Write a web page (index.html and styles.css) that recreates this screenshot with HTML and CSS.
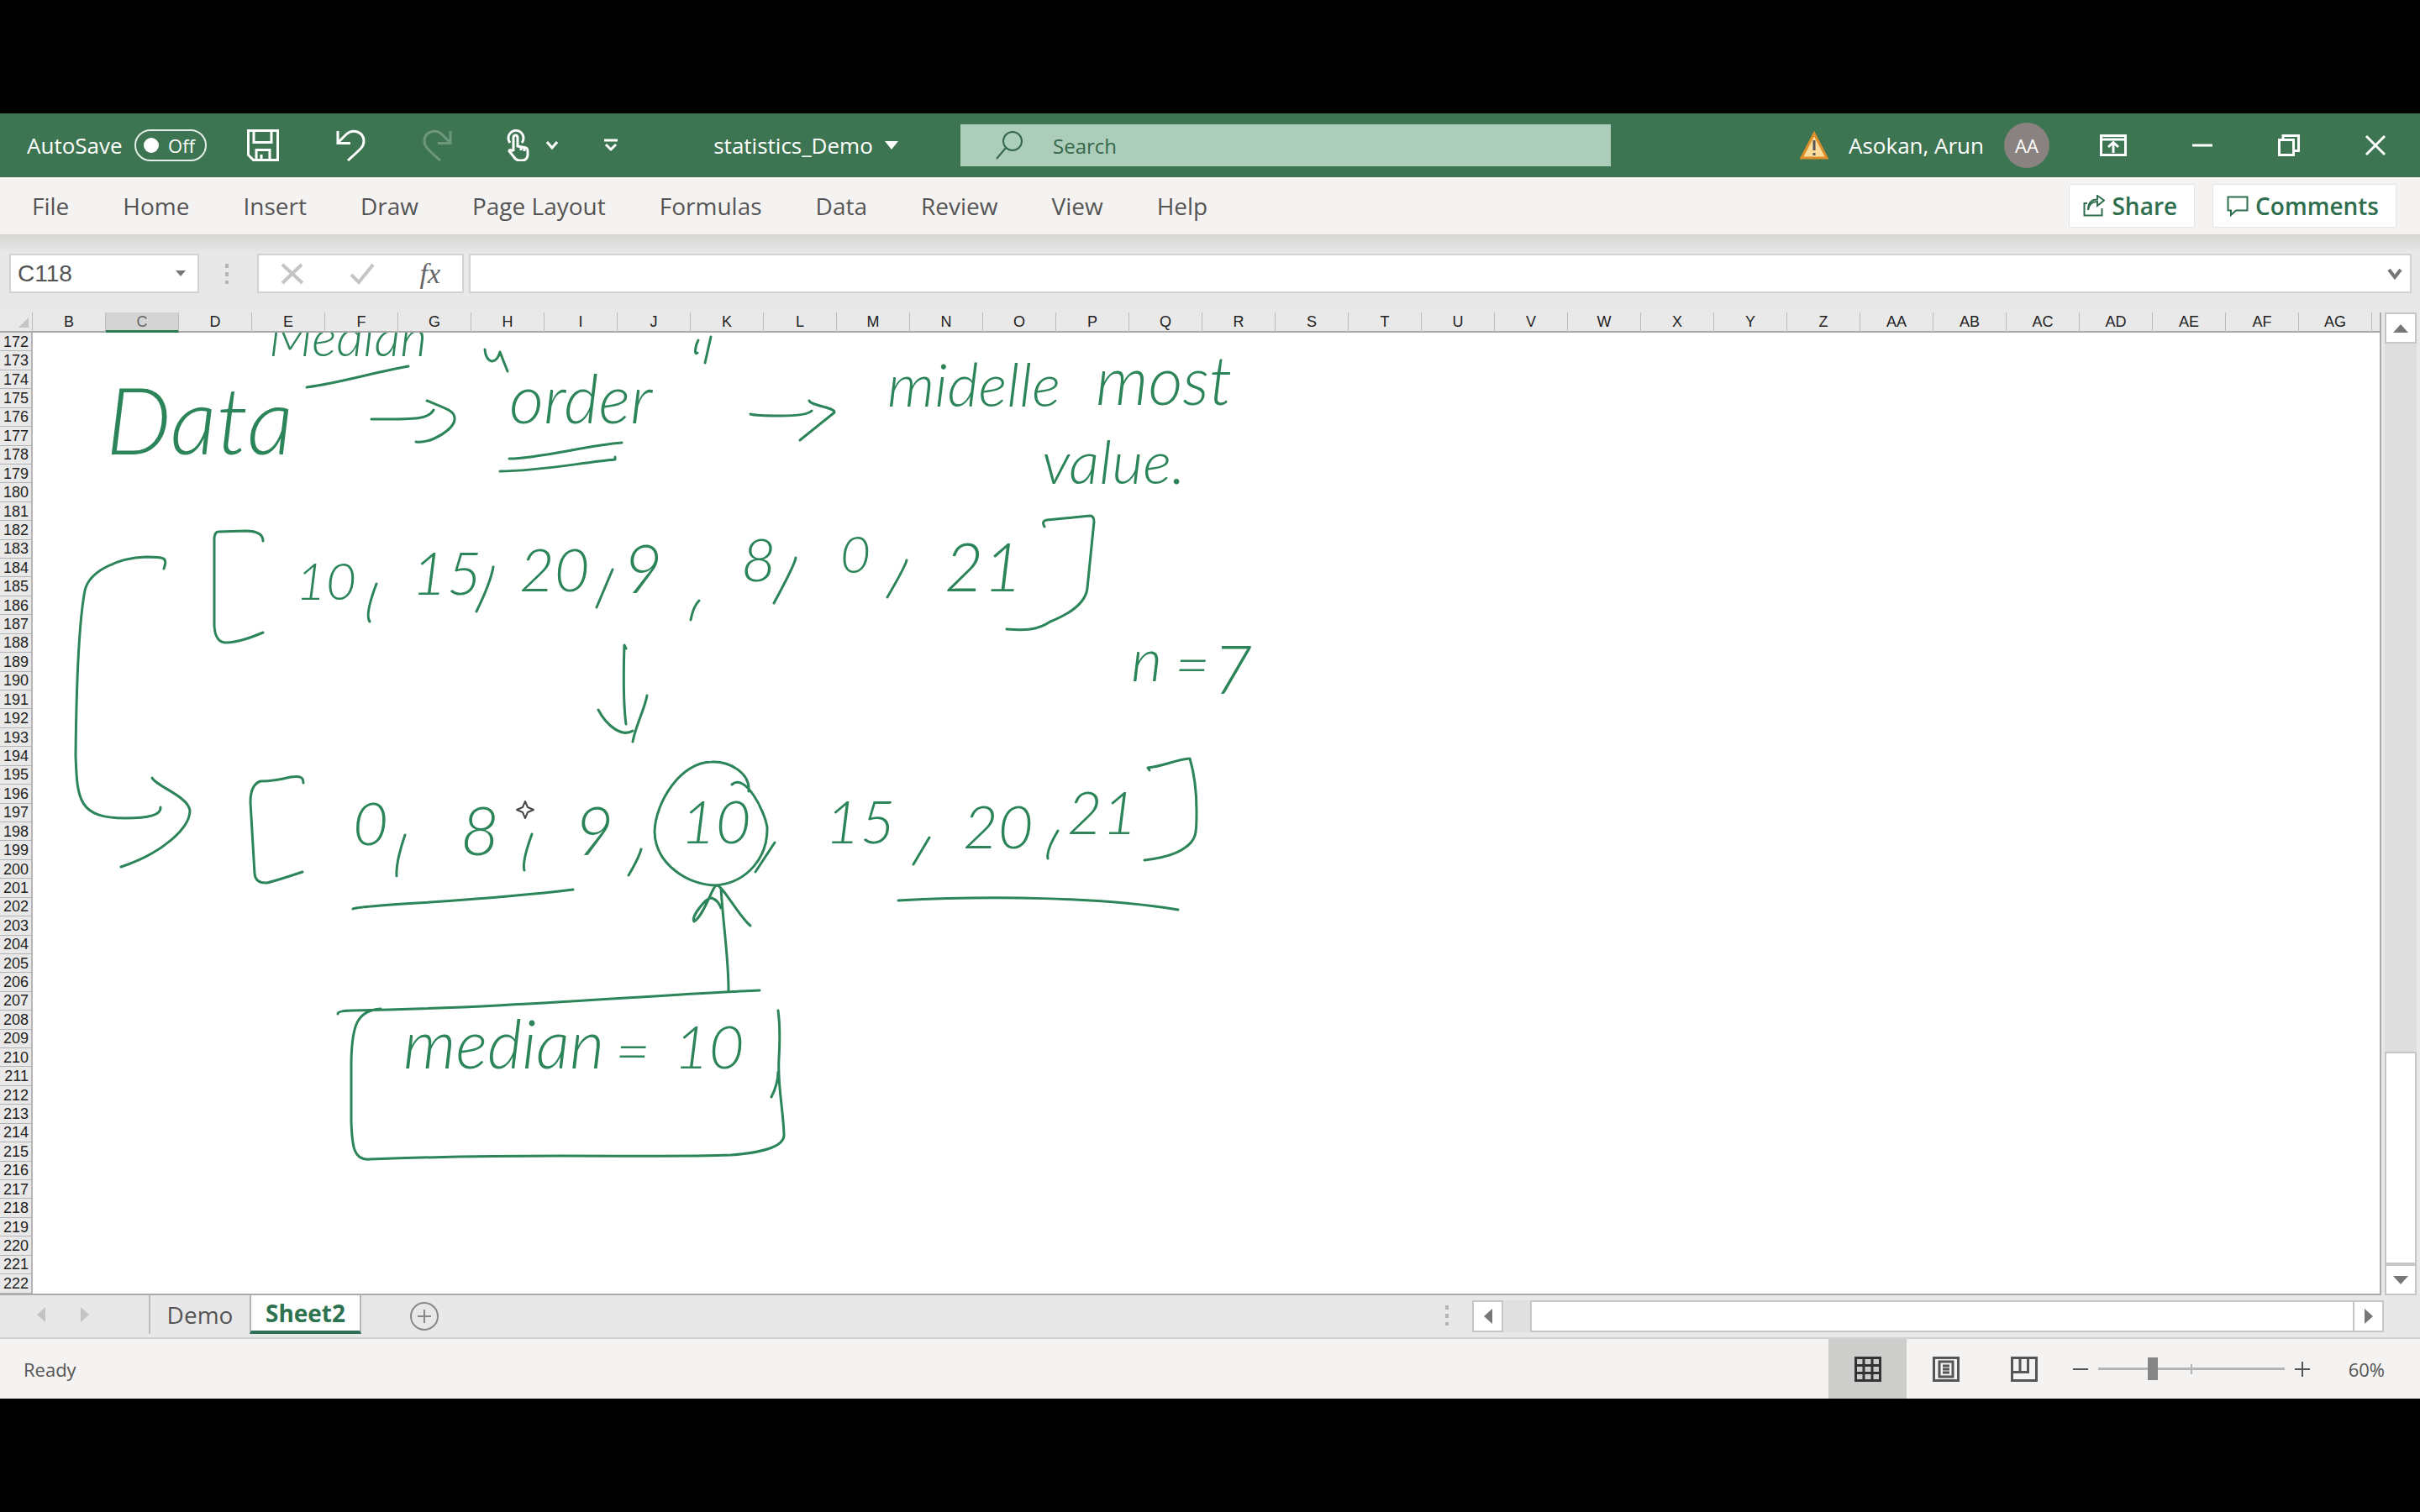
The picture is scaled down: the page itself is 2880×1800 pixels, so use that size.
FILE: index.html
```html
<!DOCTYPE html>
<html lang="en">
<head>
<meta charset="utf-8">
<title>statistics_Demo - Excel</title>
<link rel="stylesheet" href="styles.css">
</head>
<body>
<div class="app">
  <header class="titlebar">
    <label class="autosave" for="autosave">AutoSave</label>
    <span class="toggle"><input id="autosave" type="checkbox" class="toggle-input"><span class="toggle-text">Off</span></span>
    <div class="quick">
      <button class="icon-btn" aria-label="Save"><svg width="38" height="38" viewBox="0 0 38 38"><path d="M1.500 1.500H36.500V36.500H7.500L1.500 30.500ZM8 1.500V15.500H29V1.500M11 36.500V24.500H27V36.500M17 30V36.500"/></svg></button>
      <button class="icon-btn" aria-label="Undo"><svg width="38" height="38" viewBox="0 0 38 38"><path d="M4 2V16.500H19M4 16L14 6C23-2 35 4 35 14C35 20 33 22 16 37"/></svg></button>
      <button class="icon-btn faded" aria-label="Redo"><svg width="38" height="38" viewBox="0 0 38 38"><path d="M34 2V16.500H19M34 16L24 6C15-2 3 4 3 14C3 20 5 22 22 37"/></svg></button>
    </div>
    <div class="quick quick-touch">
      <button class="icon-btn" aria-label="Touch mode"><svg width="28" height="38" viewBox="0 0 28 38"><path d="M5 16A9 9 0 1 1 19 16M9 26V10Q9 7 11.500 7T14 10V20L24 22Q26 23 26 26V31Q25 37 19 37H15Q11 36 9 32L4 26Q4 23 9 26M18 20V25M22 22V26"/></svg></button>
      <button class="icon-btn" aria-label="Touch mode options"><svg width="14" height="10" viewBox="0 0 14 10"><path d="M1 1L7 8L13 1"/></svg></button>
    </div>
    <button class="icon-btn customize" aria-label="Customize toolbar"><svg width="18" height="16" viewBox="0 0 18 16"><path d="M1 2H17M3 7L9 13L15 7"/></svg></button>
    <button class="doc-name">statistics_Demo<svg width="16" height="10" viewBox="0 0 16 10"><path class="solid" d="M0 0H16L8 10Z"/></svg></button>
    <label class="search">
      <svg width="34" height="34" viewBox="0 0 34 34"><circle cx="20" cy="12" r="11"/><path d="M12 20L1 33"/></svg>
      <input type="text" placeholder="Search" aria-label="Search">
    </label>
    <div class="account">
      <svg width="34" height="34" viewBox="0 0 34 34"><path fill="#fbdc9c" stroke="#dd8f2c" stroke-width="3" d="M17 3L32 32H2Z"/><path stroke="#555" stroke-width="3" d="M17 11V23M17 26V29"/></svg>
      <span class="user">Asokan, Arun</span>
      <span class="avatar">AA</span>
    </div>
    <div class="window-controls">
      <button class="icon-btn" aria-label="Ribbon display options"><svg width="32" height="26" viewBox="0 0 32 26"><path d="M1.500 1.500H30.500V24.500H1.500ZM1.500 6H30.500M16 22V10M10 15L16 9.500L22 15"/></svg></button>
      <button class="icon-btn" aria-label="Minimize"><svg width="26" height="26" viewBox="0 0 26 26"><path d="M1 13H25"/></svg></button>
      <button class="icon-btn" aria-label="Restore"><svg width="26" height="26" viewBox="0 0 26 26"><path d="M1.500 6.500H18.500V24.500H1.500ZM6 6V1.500H24.500V19.500H19"/></svg></button>
      <button class="icon-btn" aria-label="Close"><svg width="26" height="26" viewBox="0 0 26 26"><path d="M2 2L24 24M24 2L2 24"/></svg></button>
    </div>
  </header>

  <nav class="ribbon">
    <a href="#file">File</a><a href="#home">Home</a><a href="#insert">Insert</a><a href="#draw">Draw</a><a href="#layout">Page Layout</a><a href="#formulas">Formulas</a><a href="#data">Data</a><a href="#review">Review</a><a href="#view">View</a><a href="#help">Help</a>
    <div class="ribbon-actions">
      <button class="pill"><svg width="26" height="26" viewBox="0 0 26 26"><path d="M5 10H1.500V24.500H22.500V16M6 18C7 11 11 8 17 8V13L25 6.500L17 1V5.500C10 5.500 6 10 6 18Z"/></svg>Share</button>
      <button class="pill"><svg width="26" height="26" viewBox="0 0 26 26"><path d="M1.500 2.500H24.500V18.500H11L5 24V18.500H1.500Z"/></svg>Comments</button>
    </div>
  </nav>

  <div class="formula-row">
    <div class="name-box"><input type="text" value="C118" aria-label="Name box"><svg width="12" height="8" viewBox="0 0 12 8"><path class="dark" d="M0 0H12L6 7Z"/></svg></div>
    <span class="grip"></span>
    <div class="formula-tools">
      <button aria-label="Cancel"><svg width="28" height="26" viewBox="0 0 28 26"><path d="M2 2L26 24M25 2L2 24"/></svg></button>
      <button aria-label="Enter"><svg width="30" height="26" viewBox="0 0 30 26"><path d="M2 14L11 23L28 2"/></svg></button>
      <button class="fx" aria-label="Insert function">fx</button>
    </div>
    <div class="formula"><input type="text" aria-label="Formula bar"><button aria-label="Expand formula bar"><svg width="18" height="14" viewBox="0 0 18 14"><path d="M2 2L9 11L16 2"/></svg></button></div>
  </div>

  <main class="workspace">
    <div class="sheet">
      <table>
        <colgroup><col class="row-col"><col class="data-col" span="32"><col></colgroup>
        <thead><tr><th class="corner"><svg width="12" height="12" viewBox="0 0 12 12"><path d="M12 0V12H0Z"/></svg></th><th>B</th><th class="current">C</th><th>D</th><th>E</th><th>F</th><th>G</th><th>H</th><th>I</th><th>J</th><th>K</th><th>L</th><th>M</th><th>N</th><th>O</th><th>P</th><th>Q</th><th>R</th><th>S</th><th>T</th><th>U</th><th>V</th><th>W</th><th>X</th><th>Y</th><th>Z</th><th>AA</th><th>AB</th><th>AC</th><th>AD</th><th>AE</th><th>AF</th><th>AG</th><th></th></tr></thead>
        <tbody>
          <tr><th>172</th><td rowspan="51" colspan="33"></td></tr>
          <tr><th>173</th></tr><tr><th>174</th></tr><tr><th>175</th></tr><tr><th>176</th></tr><tr><th>177</th></tr>
          <tr><th>178</th></tr><tr><th>179</th></tr><tr><th>180</th></tr><tr><th>181</th></tr><tr><th>182</th></tr>
          <tr><th>183</th></tr><tr><th>184</th></tr><tr><th>185</th></tr><tr><th>186</th></tr><tr><th>187</th></tr>
          <tr><th>188</th></tr><tr><th>189</th></tr><tr><th>190</th></tr><tr><th>191</th></tr><tr><th>192</th></tr>
          <tr><th>193</th></tr><tr><th>194</th></tr><tr><th>195</th></tr><tr><th>196</th></tr><tr><th>197</th></tr>
          <tr><th>198</th></tr><tr><th>199</th></tr><tr><th>200</th></tr><tr><th>201</th></tr><tr><th>202</th></tr>
          <tr><th>203</th></tr><tr><th>204</th></tr><tr><th>205</th></tr><tr><th>206</th></tr><tr><th>207</th></tr>
          <tr><th>208</th></tr><tr><th>209</th></tr><tr><th>210</th></tr><tr><th>211</th></tr><tr><th>212</th></tr>
          <tr><th>213</th></tr><tr><th>214</th></tr><tr><th>215</th></tr><tr><th>216</th></tr><tr><th>217</th></tr>
          <tr><th>218</th></tr><tr><th>219</th></tr><tr><th>220</th></tr><tr><th>221</th></tr><tr><th>222</th></tr>
        </tbody>
      </table>

      <!-- Ink layer: pen strokes and handwritten notes above the cells -->
      <svg class="ink" width="1500" height="1000" viewBox="39 396 1500 1000">
        <g class="note">
          <text class="sm" x="320" y="424">Median</text>
          <text class="xl" x="126" y="541">Data</text>
          <text class="lg" x="606" y="504">order</text>
          <text class="md" x="1056" y="484">midelle</text>
          <text class="lg" x="1304" y="482">most</text>
          <text class="md" x="1240" y="576">value.</text>
          <text class="sm" x="352" y="714">10</text>
          <text class="md" x="490" y="708">15</text>
          <text class="md" x="618" y="704">20</text>
          <text class="lg" x="742" y="706">9</text>
          <text class="md" x="882" y="692">8</text>
          <text class="sm" x="1000" y="682">0</text>
          <text class="lg" x="1124" y="704">21</text>
          <text class="md" x="1346" y="811">n</text>
          <text class="md" x="1398" y="816">=</text>
          <text class="lg" x="1444" y="826">7</text>
          <text class="md" x="420" y="1006">0</text>
          <text class="lg" x="548" y="1018">8</text>
          <text class="lg" x="684" y="1018">9</text>
          <text class="md" x="810" y="1004">10</text>
          <text class="md" x="982" y="1004">15</text>
          <text class="md" x="1146" y="1010">20</text>
          <text class="md" x="1270" y="993">21</text>
          <text class="lg" x="480" y="1272">median</text>
          <text class="md" x="732" y="1276">=</text>
          <text class="md" x="802" y="1272">10</text>
        </g>
        <g class="stroke">
          <path d="M365 461C405 456 450 442 486 436"/>
          <path d="M577 416C578 432 590 436 595 419L604 442M831 405C827 412 826 424 830 420M846 401L839 432"/>
          <path d="M442 499C490 499 510 500 516 488M508 477C530 486 542 489 541 499C541 510 515 528 495 526"/>
          <path d="M606 546C640 546 700 530 740 527M595 561C640 561 690 551 732 547V544"/>
          <path d="M893 493Q900 495 930 495T966 489M963 477C965 483 994 485 993 491L952 524"/>
          <path d="M313 644C313 636 305 632 292 632L260 633Q256 633 255 640V745Q256 764 268 765Q285 765 313 753"/>
          <path d="M195 677C200 664 196 663 174 663C140 664 106 680 101 703C94 740 91 800 90 900C92 950 92 974 149 974C178 974 192 970 191 961M181 926C186 936 224 948 226 965C226 985 195 1015 144 1032"/>
          <path d="M1243 627Q1239 620 1246 619L1297 614Q1302 614 1302 621L1294 700C1292 720 1270 732 1250 740C1235 750 1220 751 1198 749"/>
          <path d="M448 695Q434 732 440 740M587 675Q584 693 567 728M729 678L710 723M832 715Q825 722 822 738M947 664Q946 672 921 718M1079 667Q1077 675 1056 711"/>
          <path d="M745 772L743 768C742 800 742 840 745 862M712 845C722 864 740 878 753 870M770 828C768 842 756 865 753 883"/>
          <path d="M361 932C361 926 358 923 346 925C330 929 322 930 310 930Q298 934 298 955L303 1040Q304 1052 318 1051Q330 1048 360 1038"/>
          <path d="M482 994Q471 1026 472 1043M633 993Q621 1026 624 1036M763 1011Q760 1022 748 1042M922 1003L899 1038M1106 997L1087 1029M1259 989Q1245 1012 1247 1022"/>
          <path d="M891 942C893 920 868 906 847 907C810 907 780 955 779 990C780 1030 820 1054 853 1054C890 1050 914 1020 913 985C910 965 887 920 871 934"/>
          <path d="M1368 917L1366 914C1385 912 1400 904 1416 903Q1424 930 1424 965C1424 990 1425 1000 1409 1010Q1395 1020 1362 1024"/>
          <path d="M420 1082C430 1077 560 1074 682 1059M1069 1072C1180 1066 1310 1068 1402 1083"/>
          <path d="M867 1179C867 1140 861 1105 858 1058M893 1102C880 1092 860 1054 853 1054C848 1054 838 1090 826 1097C822 1092 840 1068 847 1069Q855 1072 858 1081"/>
          <path d="M402 1207Q402 1203 420 1203C600 1200 800 1183 904 1179M453 1201C425 1203 419 1220 418 1263V1335C419 1365 421 1382 440 1380C520 1377 600 1376 667 1376C760 1376 820 1377 870 1375Q935 1370 933 1350C932 1320 925 1290 927 1260Q929 1225 926 1203M926 1276Q926 1290 918 1306"/>
          <path class="pen-cursor" d="M625 954L628 961L635 964L628 967L625 974L622 967L615 964L622 961Z"/>
        </g>
      </svg>
    </div>
    <div class="vscroll">
      <button aria-label="Scroll up"><svg width="18" height="10" viewBox="0 0 18 10"><path d="M9 0L18 10H0Z"/></svg></button>
      <span class="vtrack"></span>
      <span class="vthumb"></span>
      <button aria-label="Scroll down"><svg width="18" height="10" viewBox="0 0 18 10"><path d="M0 0H18L9 10Z"/></svg></button>
    </div>
  </main>

  <div class="tabbar">
    <div class="tab-nav">
      <button aria-label="Previous sheet"><svg width="10" height="18" viewBox="0 0 10 18"><path d="M10 0V18L0 9Z"/></svg></button>
      <button aria-label="Next sheet"><svg width="10" height="18" viewBox="0 0 10 18"><path d="M0 0L10 9L0 18Z"/></svg></button>
    </div>
    <button class="tab">Demo</button>
    <button class="tab active">Sheet2</button>
    <button class="add" aria-label="New sheet"><svg width="36" height="36" viewBox="0 0 36 36"><circle cx="18" cy="18" r="16"/><path d="M10 18H26M18 10V26"/></svg></button>
    <div class="hscroll">
      <span class="grip"></span>
      <button aria-label="Scroll left"><svg width="10" height="18" viewBox="0 0 10 18"><path d="M10 0V18L0 9Z"/></svg></button>
      <span class="htrack"></span>
      <span class="hthumb"></span>
      <button aria-label="Scroll right"><svg width="10" height="18" viewBox="0 0 10 18"><path d="M0 0L10 9L0 18Z"/></svg></button>
    </div>
  </div>

  <footer class="status">
    <span class="ready">Ready</span>
    <div class="views">
      <button class="selected" aria-label="Normal view"><svg width="32" height="30" viewBox="0 0 32 30"><path d="M1.500 1.500H30.500V28.500H1.500ZM1.500 10.500H30.500M1.500 19.500H30.500M11 1.500V28.500M21 1.500V28.500"/></svg></button>
      <button aria-label="Page layout view"><svg width="32" height="30" viewBox="0 0 32 30"><path d="M1.500 1.500H30.500V28.500H1.500ZM8 6H24V24H8ZM12 11H20M12 15H20M12 19H20"/></svg></button>
      <button aria-label="Page break view"><svg width="32" height="30" viewBox="0 0 32 30"><path d="M1.500 1.500H30.500V28.500H1.500ZM1.500 18.500H20.500V1.500M11 1.500V18.500"/></svg></button>
    </div>
    <div class="zoom">
      <button aria-label="Zoom out"><svg width="18" height="18" viewBox="0 0 18 18"><path d="M0 9H18"/></svg></button>
      <input type="range" min="0" max="100" value="28" aria-label="Zoom">
      <button aria-label="Zoom in"><svg width="18" height="18" viewBox="0 0 18 18"><path d="M0 9H18M9 0V18"/></svg></button>
      <output>60%</output>
    </div>
  </footer>
</div>
</body>
</html>
```
FILE: styles.css
```css
* { box-sizing: border-box; }

body {
  margin: 0;
  min-height: 100vh;
  padding: 135px 0;
  display: flex;
  background: #000;
  font-family: "Open Sans", "Noto Sans", sans-serif;
  font-size: 26px;
  color: #555;
}

button, input { font: inherit; color: inherit; }
button { padding: 0; border: 0; background: none; display: flex; align-items: center; justify-content: center; }
input { border: 0; background: none; outline: 0; min-width: 0; }
svg { display: block; flex: none; fill: none; stroke: currentColor; stroke-width: 2; }
a { color: inherit; text-decoration: none; }

.app { flex: 1; min-width: 0; display: flex; flex-direction: column; background: #e8e8e8; }

/* Title bar */
.titlebar { height: 76px; display: flex; align-items: center; padding: 0 40px 0 32px; background: #3d7451; color: #fff; }
.titlebar .icon-btn svg { stroke-width: 3; }
.autosave { width: 128px; }
.toggle { width: 86px; height: 38px; padding: 0 12px 0 9px; display: flex; align-items: center; justify-content: space-between; border: 2px solid #e5efe8; border-radius: 19px; font-size: 22px; }
.toggle-input { appearance: none; width: 18px; height: 18px; margin: 0; border-radius: 50%; background: #fff; }
.quick { display: flex; align-items: center; gap: 66px; margin-left: 48px; }
.quick-touch { gap: 20px; margin-left: 62px; }
.faded { opacity: .25; }
.customize { margin-left: 54px; }
.doc-name { margin-left: 116px; gap: 14px; width: 214px; white-space: nowrap; }
.solid { fill: currentColor; stroke: none; }
.search { width: 774px; height: 50px; margin-left: 77px; padding-left: 42px; display: flex; align-items: center; gap: 34px; background: #adcdbb; color: #35684b; font-size: 24px; }
.search input { flex: 1; padding: 0; }
.search input::placeholder { color: inherit; opacity: 1; }
.account { margin-left: auto; display: flex; align-items: center; gap: 24px; }
.user { white-space: nowrap; }
.avatar { width: 54px; height: 54px; display: grid; place-items: center; border-radius: 50%; background: #8a8280; font-size: 22px; }
.window-controls { display: flex; margin-left: 60px; gap: 77px; }

/* Ribbon */
.ribbon { height: 68px; display: flex; align-items: center; gap: 64px; padding: 0 28px 0 38px; background: #f5f3f2; font-size: 28px; }
.ribbon a { white-space: nowrap; }
.ribbon-actions { display: flex; gap: 21px; margin-left: auto; font-weight: 600; color: #2f6e4e; }
.pill { height: 52px; padding: 0 20px 0 16px; gap: 8px; background: #fff; border: 1px solid #e6e4e2; border-radius: 2px; }

/* Formula bar */
.formula-row { height: 93px; display: flex; align-items: center; padding: 0 10px 0 11px; background: linear-gradient(#d6d5d3, #e8e8e8 22px); }
.name-box, .formula-tools, .formula { height: 47px; display: flex; align-items: center; background: #fff; border: 2px solid #d2d2d2; }
.name-box { width: 226px; padding: 0 14px 0 8px; font-family: "Liberation Sans", sans-serif; font-size: 28px; }
.name-box input { flex: 1; padding: 0; }
.dark { fill: #777; stroke: none; }
.grip { width: 4px; height: 24px; background: repeating-linear-gradient(#b5b5b5 0 5px, transparent 5px 10px); }
.formula-row .grip { margin: 0 34px 0 31px; }
.formula-tools { width: 246px; justify-content: space-between; padding: 0 26px; color: #c4c4c4; }
.formula-tools svg { stroke-width: 4; }
.fx { font-family: "Liberation Serif", serif; font-style: italic; font-size: 34px; color: #666; line-height: 40px; }
.formula { flex: 1; margin-left: 6px; padding-right: 9px; }
.formula input { flex: 1; }
.formula svg { stroke-width: 4; color: #777; }

/* Grid */
.workspace { flex: 1; display: grid; grid-template-columns: 1fr 38px; gap: 4px; padding-right: 4px; }
.sheet { position: relative; background: #fff; border-right: 2px solid #ababab; border-bottom: 2px solid #ababab; overflow: hidden; }
table { width: 100%; height: 1168px; table-layout: fixed; border-collapse: separate; border-spacing: 0; font-family: "Liberation Sans", sans-serif; font-size: 18px; color: #222; }
.row-col { width: 39px; }
.data-col { width: 87px; }
th { padding: 0; font-weight: 400; line-height: 20px; background: #e9e9e9; }
thead th { height: 24px; border-right: 1px solid #bcbcbc; border-bottom: 2px solid #a8a8a8; }
thead th:last-child { border-right: 0; }
thead .current { background: #d3d4d3; color: #666; border-bottom: 3px solid #2c7a4f; }
.corner svg { margin: 2px 4px 0 auto; fill: #c4c4c4; stroke: none; }
tbody th { border-right: 2px solid #b5b5b5; border-bottom: 1px solid #b5b5b5; text-align: right; padding-right: 3px; }
td { padding: 0; }
.ink { position: absolute; left: 39px; top: 24px; overflow: hidden; }
.stroke { stroke: #2c8459; stroke-width: 3; stroke-linecap: round; stroke-linejoin: round; }
.pen-cursor { stroke: #4a4648; stroke-width: 2; fill: #fff; }
.note { fill: #2c8459; stroke: none; font-family: Lato, sans-serif; font-weight: 300; font-style: italic; }
.sm { font-size: 62px; }
.md { font-size: 72px; }
.lg { font-size: 80px; }
.xl { font-size: 110px; }

/* Scroll bars */
.vscroll { display: flex; flex-direction: column; }
.vscroll button { height: 37px; background: #fff; border: 2px solid #c6c6c6; }
.vtrack { flex: 846; background: #dedede; }
.vthumb { flex: 250; background: #fff; border: 2px solid #c6c6c6; }
.vscroll svg, .hscroll svg, .tab-nav svg { fill: currentColor; stroke: none; }
.vscroll, .hscroll { color: #777; }

/* Sheet tabs */
.tabbar { height: 52px; display: flex; align-items: flex-start; border-bottom: 2px solid #d2d2d2; font-size: 28px; }
.tab-nav { width: 179px; height: 46px; display: flex; align-items: center; gap: 42px; padding-left: 44px; color: #c4c4c4; border-right: 2px solid #bcbcbc; }
.tab { height: 46px; width: 118px; }
.tab.active { width: 133px; background: #fff; border: solid #b5b5b5; border-width: 0 2px 4px; border-bottom-color: #2f6f56; color: #2d7350; font-weight: 700; }
.add { height: 50px; margin-left: 57px; color: #888; }
.hscroll { width: 1119px; height: 38px; margin: 6px 43px 0 auto; display: flex; align-items: stretch; }
.hscroll .grip { margin: 6px 28px 0 2px; }
.hscroll button { width: 37px; background: #fff; border: 2px solid #c6c6c6; }
.htrack { width: 32px; background: #e0e0e0; }
.hthumb { flex: 1; background: #fff; border: 2px solid #c6c6c6; border-right: 0; }

/* Status bar */
.status { height: 71px; display: flex; align-items: center; justify-content: space-between; padding: 0 42px 0 28px; background: #f4f3f2; font-size: 22px; }
.views { display: flex; align-self: stretch; margin-left: auto; }
.views button { width: 93px; }
.views svg { stroke-width: 3; }
.views .selected { background: #cdcdcc; color: #333; }
.zoom { display: flex; align-items: center; gap: 12px; margin-left: 12px; }
.zoom input { appearance: none; width: 222px; height: 28px; margin: 0; background: linear-gradient(#b5b5b5, #b5b5b5) center / 100% 3px no-repeat, linear-gradient(#b5b5b5, #b5b5b5) center / 2px 12px no-repeat; }
.zoom input::-webkit-slider-thumb { appearance: none; width: 12px; height: 27px; background: #858585; }
.zoom output { width: 77px; text-align: right; }
```
